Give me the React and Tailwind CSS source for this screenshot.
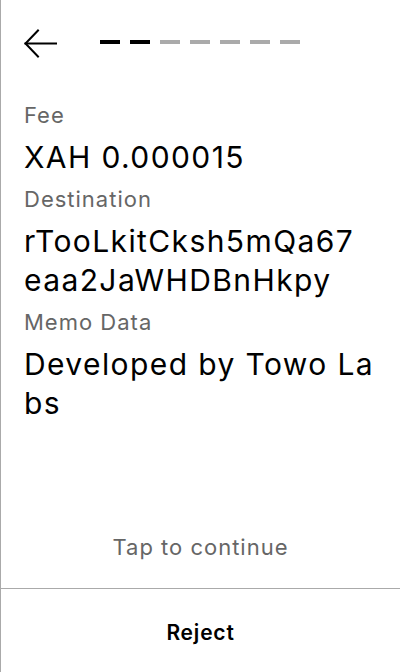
const steps = [true, true, false, false, false, false, false];

// lines are split the way the device wraps them
const fields = [
  { label: 'Fee', lines: ['XAH 0.000015'] },
  { label: 'Destination', lines: ['rTooLkitCksh5mQa67', 'eaa2JaWHDBnHkpy'] },
  { label: 'Memo Data', lines: ['Developed by Towo La', 'bs'] },
];

const BackArrow = () => (
  <svg width="34" height="29" viewBox="0 0 34 29" fill="none" stroke="#000" strokeWidth="2" strokeLinecap="square">
    <path d="M1.5 14.5H32" />
    <path d="M14 1.5L1.5 14.5L14 27.5" />
  </svg>
);

const App = () => {
  return (
    <div className="h-[672px] w-[400px] flex flex-col bg-white border-l border-[#aaaaaa] font-['Inter',sans-serif] text-black">
      <div className="h-[100px] flex items-start pt-[29px] pl-[23px]">
        <BackArrow />
        <div className="flex gap-[10px] ml-[42px] mt-[11px]">
          {steps.map((done, i) => (
            <div key={i} className={`w-[20px] h-[4px] ${done ? 'bg-black' : 'bg-[#aaaaaa]'}`}></div>
          ))}
        </div>
      </div>

      <div className="flex-1 px-[23px] flex flex-col">
        {fields.map((f) => (
          <div key={f.label} className="mb-[7px]">
            <p className="text-[22px] leading-[30px] tracking-[1px] text-[#666666] mb-[8px]">{f.label}</p>
            <p className="text-[30px] leading-[39px] tracking-[1.4px]">
              {f.lines.map((l) => (
                <span key={l} className="block">{l}</span>
              ))}
            </p>
          </div>
        ))}
        <p className="mt-auto mb-[26px] text-center text-[22px] leading-[30px] tracking-[1px] text-[#666666]">Tap to continue</p>
      </div>

      <div className="h-[84px] pt-[4px] border-t border-[#aaaaaa] flex items-center justify-center">
        <span className="text-[21px] leading-[28px] tracking-[0.8px] font-semibold">Reject</span>
      </div>
    </div>
  );
};

export default App;
